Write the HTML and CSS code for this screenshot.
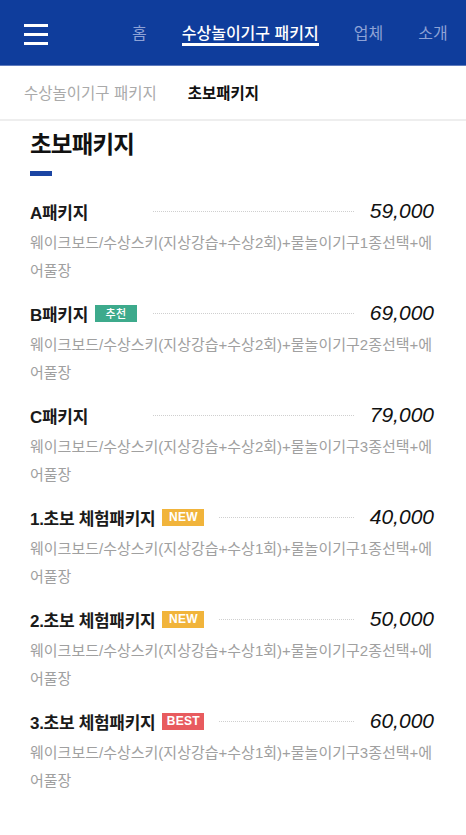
FILE: index.html
```html
<!DOCTYPE html>
<html lang="ko">
<head>
<meta charset="utf-8">
<link rel="stylesheet" href="styles.css">
</head>
<body>
<header class="topbar">
  <div class="burger"><span></span><span></span><span></span></div>
  <nav class="gnb">
    <span class="gnb-item">홈</span>
    <span class="gnb-item active">수상놀이기구 패키지</span>
    <span class="gnb-item">업체</span>
    <span class="gnb-item">소개</span>
  </nav>
</header>
<div class="subnav">
  <span class="sub-item">수상놀이기구 패키지</span>
  <span class="sub-item current">초보패키지</span>
</div>
<main class="content">
  <h1 class="title">초보패키지</h1>
  <div class="title-bar"></div>
  <ul class="pkg-list">
    <li class="pkg">
      <div class="pkg-row">
        <div class="pkg-name">A패키지</div>
        <div class="dots"></div>
        <div class="price">59,000</div>
      </div>
      <p class="desc">웨이크보드/수상스키(지상강습+수상2회)+물놀이기구1종선택+에어풀장</p>
    </li>
    <li class="pkg">
      <div class="pkg-row">
        <div class="pkg-name">B패키지<span class="badge green">추천</span></div>
        <div class="dots"></div>
        <div class="price">69,000</div>
      </div>
      <p class="desc">웨이크보드/수상스키(지상강습+수상2회)+물놀이기구2종선택+에어풀장</p>
    </li>
    <li class="pkg">
      <div class="pkg-row">
        <div class="pkg-name">C패키지</div>
        <div class="dots"></div>
        <div class="price">79,000</div>
      </div>
      <p class="desc">웨이크보드/수상스키(지상강습+수상2회)+물놀이기구3종선택+에어풀장</p>
    </li>
    <li class="pkg">
      <div class="pkg-row">
        <div class="pkg-name">1.초보 체험패키지<span class="badge yellow">NEW</span></div>
        <div class="dots"></div>
        <div class="price">40,000</div>
      </div>
      <p class="desc">웨이크보드/수상스키(지상강습+수상1회)+물놀이기구1종선택+에어풀장</p>
    </li>
    <li class="pkg">
      <div class="pkg-row">
        <div class="pkg-name">2.초보 체험패키지<span class="badge yellow">NEW</span></div>
        <div class="dots"></div>
        <div class="price">50,000</div>
      </div>
      <p class="desc">웨이크보드/수상스키(지상강습+수상1회)+물놀이기구2종선택+에어풀장</p>
    </li>
    <li class="pkg">
      <div class="pkg-row">
        <div class="pkg-name">3.초보 체험패키지<span class="badge red">BEST</span></div>
        <div class="dots"></div>
        <div class="price">60,000</div>
      </div>
      <p class="desc">웨이크보드/수상스키(지상강습+수상1회)+물놀이기구3종선택+에어풀장</p>
    </li>
  </ul>
</main>
</body>
</html>
```
FILE: styles.css
```css
* { box-sizing: border-box; }
html, body { margin: 0; padding: 0; background: #fff; }
body {
  font-family: "Liberation Sans", "Noto Sans CJK KR", sans-serif;
  color: #222;
  width: 466px;
  overflow: hidden;
}

.topbar {
  height: 65px;
  background: #0f3d9c;
  display: flex;
  align-items: flex-start;
  padding-left: 24px;
  overflow: hidden;
  box-shadow: 0 1px 0 #5f7bbd;
}
.burger {
  width: 24px;
  margin-top: 24px;
  display: flex;
  flex-direction: column;
  gap: 6px;
  flex: none;
}
.burger span {
  display: block;
  height: 3px;
  background: #fff;
}
.gnb {
  margin-left: 84px;
  margin-top: 22px;
  display: flex;
  gap: 35px;
  white-space: nowrap;
  flex: none;
}
.gnb-item {
  font-family: "Noto Sans CJK KR", sans-serif;
  font-size: 16px;
  letter-spacing: 0;
  line-height: 20px;
  color: #8da2d6;
  padding-bottom: 1px;
  border-bottom: 3px solid transparent;
}
.gnb-item.active {
  color: #fff;
  font-weight: 500;
  border-bottom-color: #fff;
}

.subnav {
  height: 56px;
  display: flex;
  align-items: center;
  gap: 31px;
  padding-left: 24px;
  border-bottom: 2px solid #eeeeee;
  padding-bottom: 1px;
}
.sub-item {
  font-family: "Noto Sans CJK KR", sans-serif;
  font-size: 15.5px;
  letter-spacing: 0;
  color: #aaaaaa;
}
.sub-item.current {
  color: #111;
  font-weight: 700;
}

.content {
  padding: 0 30px;
}
.title {
  margin: 7px 0 0;
  font-family: "Noto Sans CJK KR", sans-serif;
  font-size: 23.5px;
  letter-spacing: -0.8px;
  line-height: 30px;
  font-weight: 700;
  color: #111;
}
.title-bar {
  width: 22px;
  height: 5px;
  background: #1b45a3;
  margin-top: 13px;
}
.pkg-list {
  list-style: none;
  margin: 23px 0 0;
  padding: 0;
}
.pkg {
  padding-bottom: 16px;
}
.pkg-row {
  height: 24px;
  display: flex;
  align-items: center;
}
.pkg-name {
  min-width: 108px;
  margin-right: 15px;
  display: flex;
  align-items: center;
  font-size: 17px;
  font-weight: 700;
  letter-spacing: -0.3px;
  color: #1a1a1a;
  white-space: nowrap;
}
.badge {
  display: inline-block;
  width: 42px;
  height: 17px;
  line-height: 17px;
  margin-left: 7px;
  text-align: center;
  color: #fff;
  font-size: 12px;
  letter-spacing: 0.3px;
  font-weight: 700;
}
.badge.green { background: #3daa8c; font-family: "Noto Sans CJK KR", sans-serif; font-weight: 500; font-size: 11px; }
.badge.yellow { background: #f1b43b; }
.badge.red { background: #e85b5e; }
.dots {
  flex: 1;
  border-top: 1px dotted #cfcfcf;
  height: 0;
}
.price {
  width: 82px;
  text-align: right;
  font-size: 21px;
  font-style: italic;
  color: #111;
  padding-right: 2px;
}
.desc {
  margin: 6px 0 0;
  font-size: 15px;
  line-height: 28px;
  color: #a0a0a0;
}
```
